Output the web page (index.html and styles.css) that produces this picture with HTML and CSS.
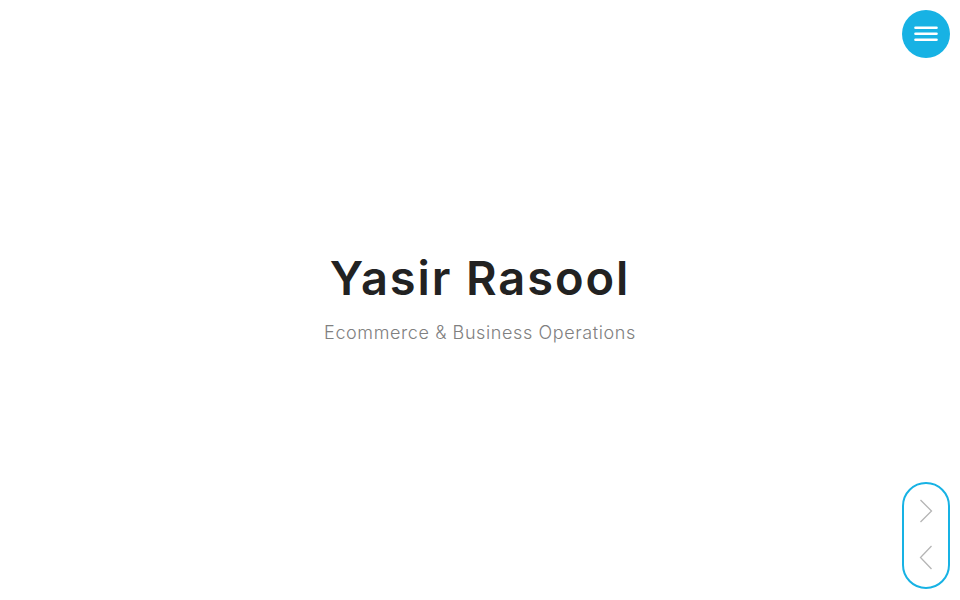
FILE: index.html
```html
<!DOCTYPE html>
<html>
<head>
<meta charset="utf-8">
<link rel="stylesheet" href="styles.css">
</head>
<body>
<main class="hero">
  <h1 class="name">Yasir Rasool</h1>
  <p class="role">Ecommerce &amp; Business Operations</p>
</main>
<button class="menu-btn" aria-label="Menu">
  <svg width="24" height="16" viewBox="0 0 24 16"><g stroke="#fff" stroke-width="2.6" stroke-linecap="round"><line x1="1.5" y1="1.8" x2="22.5" y2="1.8"/><line x1="1.5" y1="7.8" x2="22.5" y2="7.8"/><line x1="1.5" y1="13.8" x2="22.5" y2="13.8"/></g></svg>
</button>
<nav class="pager">
  <span class="arrow"><svg width="14" height="24" viewBox="0 0 14 24"><polyline points="1.5,1 12.5,12 1.5,23" fill="none" stroke="#b5b5b5" stroke-width="1.3"/></svg></span>
  <span class="arrow"><svg width="14" height="26" viewBox="0 0 14 26"><polyline points="12.5,1 1.5,12.5 12.5,24" fill="none" stroke="#b5b5b5" stroke-width="1.3"/></svg></span>
</nav>
</body>
</html>
```

FILE: styles.css
```css
html, body {
  margin: 0;
  padding: 0;
  background: #fff;
  height: 100%;
}
body {
  font-family: Inter, "Open Sans", sans-serif;
}
.hero {
  height: 600px;
  display: flex;
  flex-direction: column;
  align-items: center;
  justify-content: center;
  padding-bottom: 6px;
  box-sizing: border-box;
}
.name {
  margin: 0;
  font-family: Inter, "Noto Sans", sans-serif;
  font-weight: 600;
  font-size: 47px;
  line-height: 56px;
  color: #222;
  letter-spacing: 1.9px;
}
.role {
  margin: 15px 0 0;
  font-family: Inter, sans-serif;
  font-weight: 300;
  font-size: 18px;
  line-height: 24px;
  color: #808080;
  letter-spacing: 0.6px;
}
.menu-btn {
  position: absolute;
  top: 10px;
  right: 10px;
  width: 48px;
  height: 48px;
  border-radius: 50%;
  border: none;
  background: #17b2e4;
  display: flex;
  align-items: center;
  justify-content: center;
  padding: 0;
}
.pager {
  position: absolute;
  right: 10px;
  top: 482px;
  width: 44px;
  border: 2px solid #17b2e4;
  border-radius: 24px;
  display: flex;
  flex-direction: column;
  align-items: center;
  justify-content: space-between;
  padding: 15px 0 16px;
  box-sizing: content-box;
  height: 72px;
}
.arrow {
  display: flex;
}
```
